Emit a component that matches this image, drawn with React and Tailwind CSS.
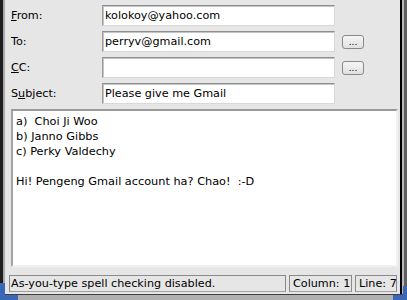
import React from "react";

const font = { fontFamily: '"DejaVu Sans", "Liberation Sans", sans-serif' };

function Field({ value }) {
  return (
    <div className="w-[233px] h-[21px] bg-white border border-t-[#8e8e8e] border-l-[#9a9a9a] border-b-[#d8d8d8] border-r-[#d8d8d8] shadow-[inset_1px_1px_0_#c4c4c4] flex items-center pl-[2px] text-[11.2px] text-black leading-none whitespace-nowrap">
      {value}
    </div>
  );
}

function Dots() {
  return (
    <div className="ml-[7px] w-[22px] h-[14px] rounded-[3px] border border-[#8a8a8a] bg-gradient-to-b from-[#f6f6f6] to-[#e0e0e0] flex items-end justify-center text-[9px] leading-[10px] text-black pb-[1px]">
      ...
    </div>
  );
}

function Row({ label, value, button }) {
  return (
    <div className="flex items-center h-[21px] mb-[5px] last:mb-0">
      <div className="w-[97px] pl-[6px] text-[11.2px] text-black leading-none whitespace-nowrap">{label}</div>
      <Field value={value} />
      {button && <Dots />}
    </div>
  );
}

export default function App() {
  return (
    <div className="w-[407px] h-[300px] flex flex-col bg-[#e6e6e6] relative overflow-hidden" style={font}>
      <div className="flex flex-1 min-h-0">
        <div className="w-[5px] border-l-[3px] border-[#1e1e1e] bg-[#a8a8a8]" />
        <div className="flex-1 flex flex-col pt-[5px]">
          <div className="flex flex-col">
            <Row label={<><u>F</u>rom:</>} value="kolokoy@yahoo.com" />
            <Row label="To:" value="perryv@gmail.com" button />
            <Row label={<><u>C</u>C:</>} value="" button />
            <Row label={<>S<u>u</u>bject:</>} value="Please give me Gmail" />
          </div>
          <div className="mt-[5px] ml-[6px] w-[387px] h-[158px] bg-white border-2 border-t-[#9a9a9a] border-l-[#a4a4a4] border-b-[#f0f0f0] border-r-[#f0f0f0] pl-[3px] pt-[3px] text-[11.3px] leading-[15px] text-black whitespace-pre">
            <div>a)  Choi Ji Woo</div>
            <div>b) Janno Gibbs</div>
            <div>c) Perky Valdechy</div>
            <div>&nbsp;</div>
            <div>Hi! Pengeng Gmail account ha? Chao!  :-D</div>
          </div>
          <div className="mt-[8px] ml-[4px] flex gap-[3px] h-[17px] text-[11.2px] leading-none text-black whitespace-nowrap">
            <div className="w-[277px] border border-t-[#8a8a8a] border-l-[#8a8a8a] border-b-[#a0a0a0] border-r-[#8a8a8a] flex items-center pl-[1px]">
              As-you-type spell checking disabled.
            </div>
            <div className="w-[63px] border border-t-[#8a8a8a] border-l-[#8a8a8a] border-b-[#a0a0a0] border-r-[#8a8a8a] flex items-center pl-[3px]">
              Column: 1
            </div>
            <div className="w-[42px] border border-t-[#8a8a8a] border-l-[#8a8a8a] border-b-[#a0a0a0] border-r-[#8a8a8a] flex items-center pl-[3px]">
              Line: 7
            </div>
          </div>
        </div>
        <div className="w-[7px] border-l-2 border-l-black border-r-[3px] border-r-[#606060] bg-[#b8b8b8]" />
      </div>
      <div className="h-[6px] border-t border-[#404040] bg-[#b0b0b0]" />
      <div className="absolute left-0 top-[283px] w-[5px] h-[17px] bg-[#3a68b8]" />
      <div className="absolute left-0 top-[295px] w-[18px] h-[5px] bg-[#3a68b8]" />
      <div className="absolute right-0 top-[286px] w-[4px] h-[14px] bg-[#3a68b8]" />
      <div className="absolute right-0 top-[295px] w-[14px] h-[5px] bg-[#3a68b8]" />
    </div>
  );
}
